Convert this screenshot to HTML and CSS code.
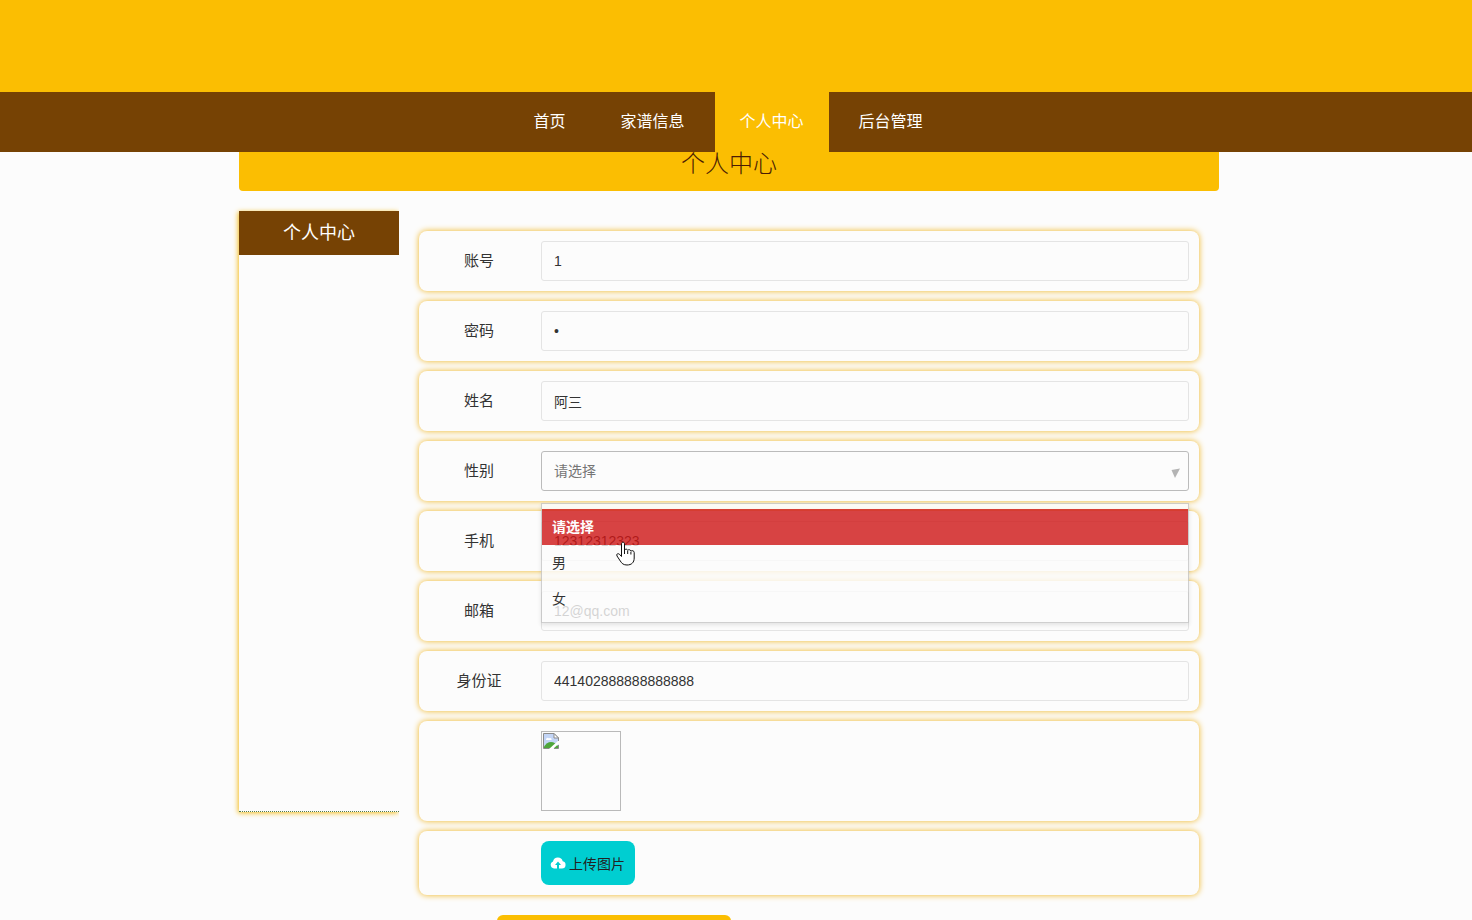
FILE: index.html
```html
<!DOCTYPE html>
<html lang="zh-CN">
<head>
<meta charset="utf-8">
<title>个人中心</title>
<link rel="stylesheet" href="styles.css">
</head>
<body>
<header class="banner"></header>
<nav class="nav">
  <a class="nav-link" href="#">首页</a>
  <a class="nav-link" href="#">家谱信息</a>
  <a class="nav-link active" href="#">个人中心</a>
  <a class="nav-link" href="#">后台管理</a>
</nav>
<main class="page">
  <h1 class="page-title">个人中心</h1>
  <div class="columns">
    <aside class="side"><h2 class="side-title">个人中心</h2></aside>
    <form class="form">
      <div class="row"><label class="label" for="account">账号</label><input class="field" id="account" type="text" value="1"></div>
      <div class="row"><label class="label" for="password">密码</label><input class="field" id="password" type="password" value="1"></div>
      <div class="row"><label class="label" for="fullname">姓名</label><input class="field" id="fullname" type="text" value="阿三"></div>
      <div class="row">
        <label class="label" for="gender">性别</label>
        <div class="select-wrap">
          <select class="field select" id="gender"><option>请选择</option><option>男</option><option>女</option></select>
          <svg class="arrow" viewBox="0 0 10 10" aria-hidden="true"><path d="M0.500 2 9 0.500 4 10Z"/></svg>
          <div class="menu" role="listbox" aria-label="性别">
            <button class="option selected" type="button" role="option" aria-selected="true">请选择</button>
            <button class="option" type="button" role="option">男</button>
            <button class="option" type="button" role="option">女</button>
          </div>
          <svg class="pointer" viewBox="0 0 20 26" aria-hidden="true"><path d="M5.500 15V3c0-2.400 3-2.400 3 0v6c.6-1.300 3-1.200 3.200.5.6-1.300 2.900-1 3.200.7.900-1 3.300-.6 3.300 1.300V17c0 4.500-2.700 7-7.200 7-3.500 0-5.200-1.500-6.700-4L1 15c-1-2 1-3 2.400-1.800L5.500 15.500Z"/><path d="M8.500 9v4M11.700 10v3M14.900 11v2.500"/></svg>
        </div>
      </div>
      <div class="row"><label class="label" for="phone">手机</label><input class="field" id="phone" type="text" value="12312312323"></div>
      <div class="row"><label class="label" for="email">邮箱</label><input class="field" id="email" type="text" value="12@qq.com"></div>
      <div class="row"><label class="label" for="idcard">身份证</label><input class="field" id="idcard" type="text" value="441402888888888888"></div>
      <div class="row">
        <span class="label"></span>
        <div class="photo">
          <svg class="broken" viewBox="0 0 16 16" aria-hidden="true">
            <path fill="#c3d5f6" d="M.5.5H11L15.500 5v10.500H.5Z"/>
            <path fill="#fff" d="M3 7c0-2 2-3 3-1.500 1.500-1 3 0 2.500 1.500Z"/>
            <path fill="#4ea63c" d="M1 15v-1.500C3 11 5 9 8 9c3 0 5 2 7 4v2Z"/>
            <path fill="#fff" d="M6 16 16 7v3.500L10 16Z"/>
            <path fill="none" stroke="#8b8b8b" d="M6.500 15.500H.5V.5H11L15.500 5v3M11 15.500h4.500V12"/>
            <path fill="#fff" stroke="#8b8b8b" d="M11 .5V5h4.500Z"/>
          </svg>
        </div>
      </div>
      <div class="row">
        <span class="label"></span>
        <button class="upload" type="button">
          <svg class="cloud" viewBox="0 0 16 14" aria-hidden="true"><path fill="#fff" d="M4 12.500A3.700 3.700 0 0 1 3 5.400 5 5 0 0 1 12.700 5.200 3.700 3.700 0 0 1 12 12.500H9V9h2L8 5.500 5 9h2v3.500Z"/></svg>
          <span>上传图片</span>
        </button>
      </div>
      <button class="submit" type="submit" aria-label="更新信息"></button>
    </form>
  </div>
</main>
</body>
</html>
```
FILE: styles.css
```css
* { box-sizing: border-box; }
body {
  margin: 0;
  height: 100vh;
  overflow: hidden;
  background: #fcfcfc;
  color: #333;
  font-family: "Liberation Sans", "Noto Sans CJK SC", sans-serif;
  font-size: 14px;
}
.banner { height: 92px; background: #fbbe02; }
.nav {
  display: flex;
  justify-content: center;
  gap: 5px;
  padding-right: 16px;
  background: #764204;
}
.nav-link {
  padding: 0 25px;
  line-height: 60px;
  font-size: 16px;
  color: #fff;
  text-decoration: none;
}
.nav-link.active { background: #fbbe02; }
.page { padding-right: 14px; }
.page-title {
  max-width: 980px;
  margin: 0 auto 20px;
  padding-bottom: 19px;
  border-radius: 0 0 4px 4px;
  background: #fbbe02;
  color: #4a1c04;
  font-size: 24px;
  font-weight: 300;
  font-family: "Noto Sans CJK SC", sans-serif;
  line-height: 20px;
  text-align: center;
}
.columns {
  display: flex;
  align-items: flex-start;
  max-width: 980px;
  margin: 0 auto;
}
.side {
  flex: 0 0 160px;
  min-height: 601px;
  border-bottom: 1px dotted #4f7c4a;
  box-shadow: -1px 1px 5px #f3bc1c;
  clip-path: inset(-6px 0 -8px -8px);
}
.side-title {
  margin: 0;
  background: #764204;
  color: #fff;
  font-size: 18px;
  font-weight: 400;
  line-height: 44px;
  text-align: center;
}
.form {
  flex: 1;
  display: flex;
  flex-direction: column;
  gap: 10px;
  padding: 20px;
}
.row {
  display: flex;
  gap: 12px;
  padding: 10px;
  border-radius: 8px;
  box-shadow: 0 0 6px #f0b41c;
}
.label {
  flex: 0 0 100px;
  font-size: 15px;
  line-height: 40px;
  text-align: center;
}
.field {
  flex: 1;
  width: 100%;
  min-width: 0;
  height: 40px;
  padding: 0 12px;
  border: 1px solid #e4e4e4;
  border-radius: 3px;
  background: #fcfcfc;
  color: #333;
  font: inherit;
}
.select-wrap { position: relative; flex: 1; display: flex; }
.select { appearance: none; border-color: #bbb; color: #757575; }
.arrow {
  position: absolute;
  right: 8px;
  top: 17px;
  width: 10px;
  height: 10px;
  fill: #b4b4b4;
}
.menu {
  position: absolute;
  z-index: 2;
  top: 52px;
  left: 0;
  right: 0;
  padding: 5px 0;
  border: 1px solid #c4c4c4;
  background: #fcfcfc;
  box-shadow: 0 2px 4px rgba(0, 0, 0, .12);
  opacity: .8;
}
.option {
  display: block;
  width: 100%;
  padding: 0 10px;
  border: 0;
  background: none;
  color: #000;
  font: inherit;
  line-height: 36px;
  text-align: left;
}
.option.selected { background: #cf1616; color: #fff; font-weight: 700; }
.pointer {
  position: absolute;
  z-index: 3;
  top: 90px;
  left: 75px;
  width: 20px;
  height: 26px;
  fill: #fff;
  stroke: #111;
}
.photo {
  width: 80px;
  height: 80px;
  padding: 1px;
  border: 1px solid #b9b9b9;
}
.broken { display: block; width: 16px; height: 16px; }
.upload {
  display: flex;
  align-items: center;
  gap: 3px;
  height: 44px;
  padding: 0 10px 0 9px;
  border: 0;
  border-radius: 8px;
  background: #00ced1;
  color: #222;
  font: inherit;
}
.cloud { width: 16px; height: 14px; }
.submit {
  width: 30%;
  height: 44px;
  margin: 10px 0 0 10%;
  border: 0;
  border-radius: 6px;
  background: #fbbe02;
}
```
